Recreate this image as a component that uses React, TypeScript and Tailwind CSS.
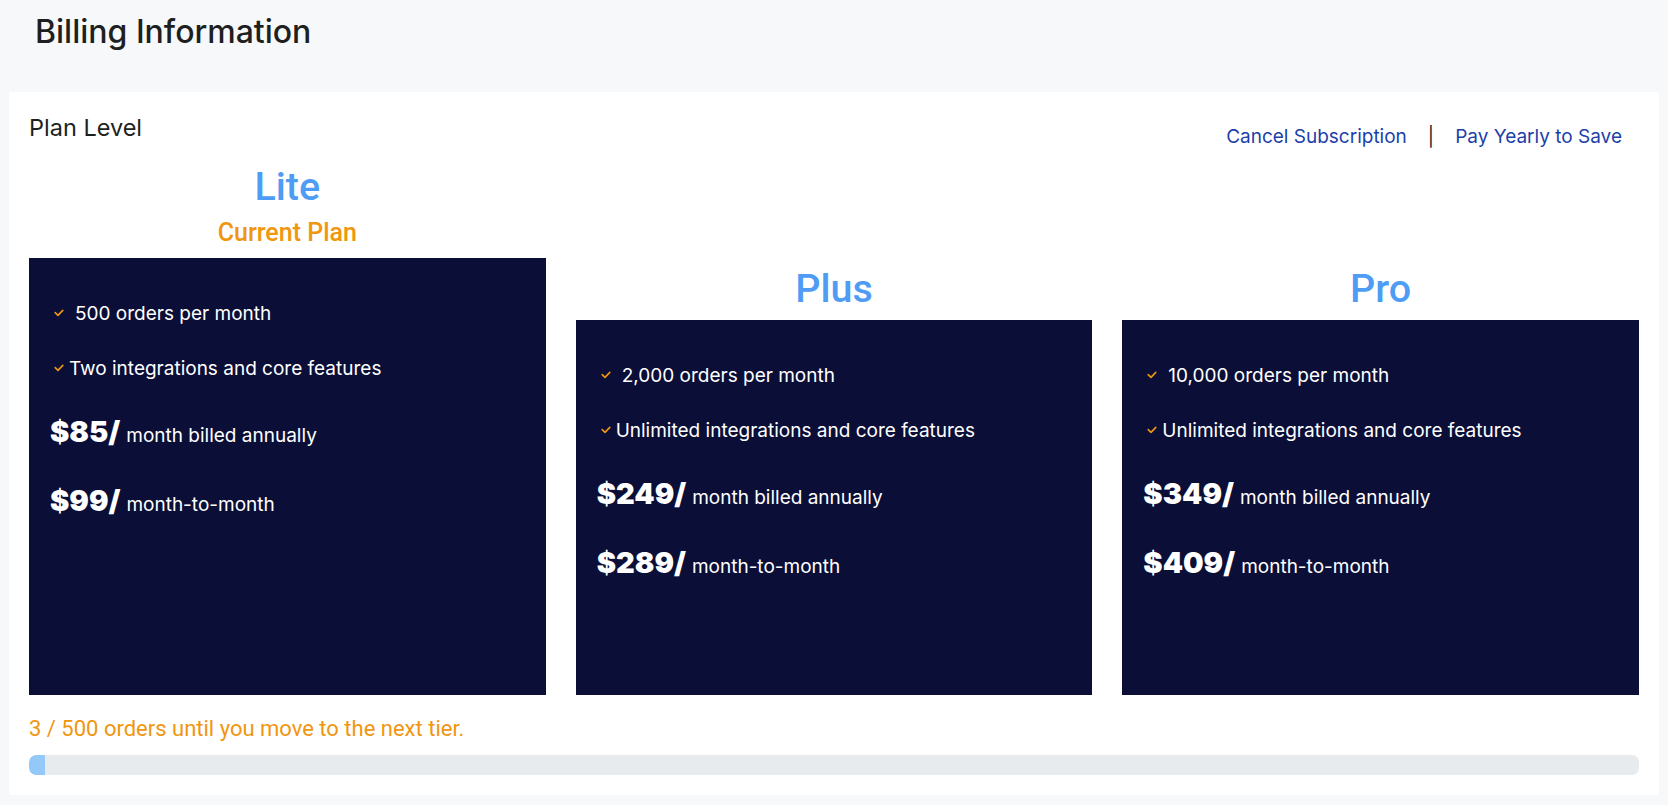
import React from "react";

type Plan = {
  name: string;
  current?: boolean;
  features: { text: string; spaced: boolean }[];
  annual: string;
  monthly: string;
};

const plans: Plan[] = [
  {
    name: "Lite",
    current: true,
    features: [
      { text: "500 orders per month", spaced: true },
      { text: "Two integrations and core features", spaced: false },
    ],
    annual: "$85/",
    monthly: "$99/",
  },
  {
    name: "Plus",
    features: [
      { text: "2,000 orders per month", spaced: true },
      { text: "Unlimited integrations and core features", spaced: false },
    ],
    annual: "$249/",
    monthly: "$289/",
  },
  {
    name: "Pro",
    features: [
      { text: "10,000 orders per month", spaced: true },
      { text: "Unlimited integrations and core features", spaced: false },
    ],
    annual: "$349/",
    monthly: "$409/",
  },
];

function Check() {
  return (
    <svg width="10" height="8" viewBox="0 0 10 8" className="shrink-0 mr-[5px] self-center -mt-[2px]">
      <path d="M1.2 3.6 L4 6.4 L8.8 1.4" fill="none" stroke="#f0960f" strokeWidth="1.6" strokeLinecap="round" strokeLinejoin="round" />
    </svg>
  );
}

function PlanBox({ plan }: { plan: Plan }) {
  return (
    <div
      className={`bg-[#0b0f37] text-white px-[21px] pt-[44px] ${plan.current ? "h-[437px] mt-[11px]" : "h-[375px] mt-[8px]"}`}
    >
      {plan.features.map((f, i) => (
        <div key={i} className={`flex items-center ml-[4px] text-[19px] leading-[24px] ${i === 0 ? "mb-[31px]" : ""}`}>
          <Check />
          <span className={f.spaced ? "ml-[6px]" : ""}>{f.text}</span>
        </div>
      ))}
      <div className="flex items-baseline mt-[33px]">
        <span className="text-[29px] leading-[36px] font-black">{plan.annual}</span>
        <span className="text-[19px] leading-[24px] ml-[6px]">month billed annually</span>
      </div>
      <div className="flex items-baseline mt-[33px]">
        <span className="text-[29px] leading-[36px] font-black">{plan.monthly}</span>
        <span className="text-[19px] leading-[24px] ml-[6px]">month-to-month</span>
      </div>
    </div>
  );
}

export default function App() {
  return (
    <div className="min-h-[805px] bg-[#f7f8fa] px-[9px] pb-[10px] font-['Inter','Noto_Sans',sans-serif]">
      <div className="pt-[12px] pl-[26px] mb-[40px]">
        <h1 className="text-[32px] leading-[40px] font-medium text-[#1d1f21]">Billing Information</h1>
      </div>
      <div className="bg-white px-[20px] pt-[22px] pb-[20px]">
        <div className="flex justify-between items-start">
          <div className="text-[23.5px] leading-[28px] text-[#1d1f21]">Plan Level</div>
          <div className="flex items-center mt-[11px] pr-[17px] text-[19px] leading-[24px]">
            <a className="text-[#1c3faa] cursor-pointer">Cancel Subscription</a>
            <span className="mx-[21px] text-[#212529]">|</span>
            <a className="text-[#1c3faa] cursor-pointer">Pay Yearly to Save</a>
          </div>
        </div>
        <div className="grid grid-cols-3 gap-[30px] items-end mt-[15px]">
          {plans.map((p) => (
            <div key={p.name} className="flex flex-col">
              <h3 className="text-center font-['Roboto',sans-serif] font-medium text-[39.5px] leading-[46px] text-[#4f9cf5]">
                {p.name}
              </h3>
              {p.current && (
                <p className="text-center font-['Roboto',sans-serif] font-medium text-[25px] leading-[28px] text-[#f0960f] mt-[9px]">
                  Current Plan
                </p>
              )}
              <PlanBox plan={p} />
            </div>
          ))}
        </div>
        <p className="mt-[20px] font-['Roboto',sans-serif] text-[22px] leading-[28px] text-[#f0960f]">
          3 / 500 orders until you move to the next tier.
        </p>
        <div className="mt-[12px] h-[20px] rounded-[7px] bg-[#e8ebee] overflow-hidden">
          <div className="h-full bg-[#93c9f8] rounded-l-[7px]" style={{ width: "16px" }} />
        </div>
      </div>
    </div>
  );
}
